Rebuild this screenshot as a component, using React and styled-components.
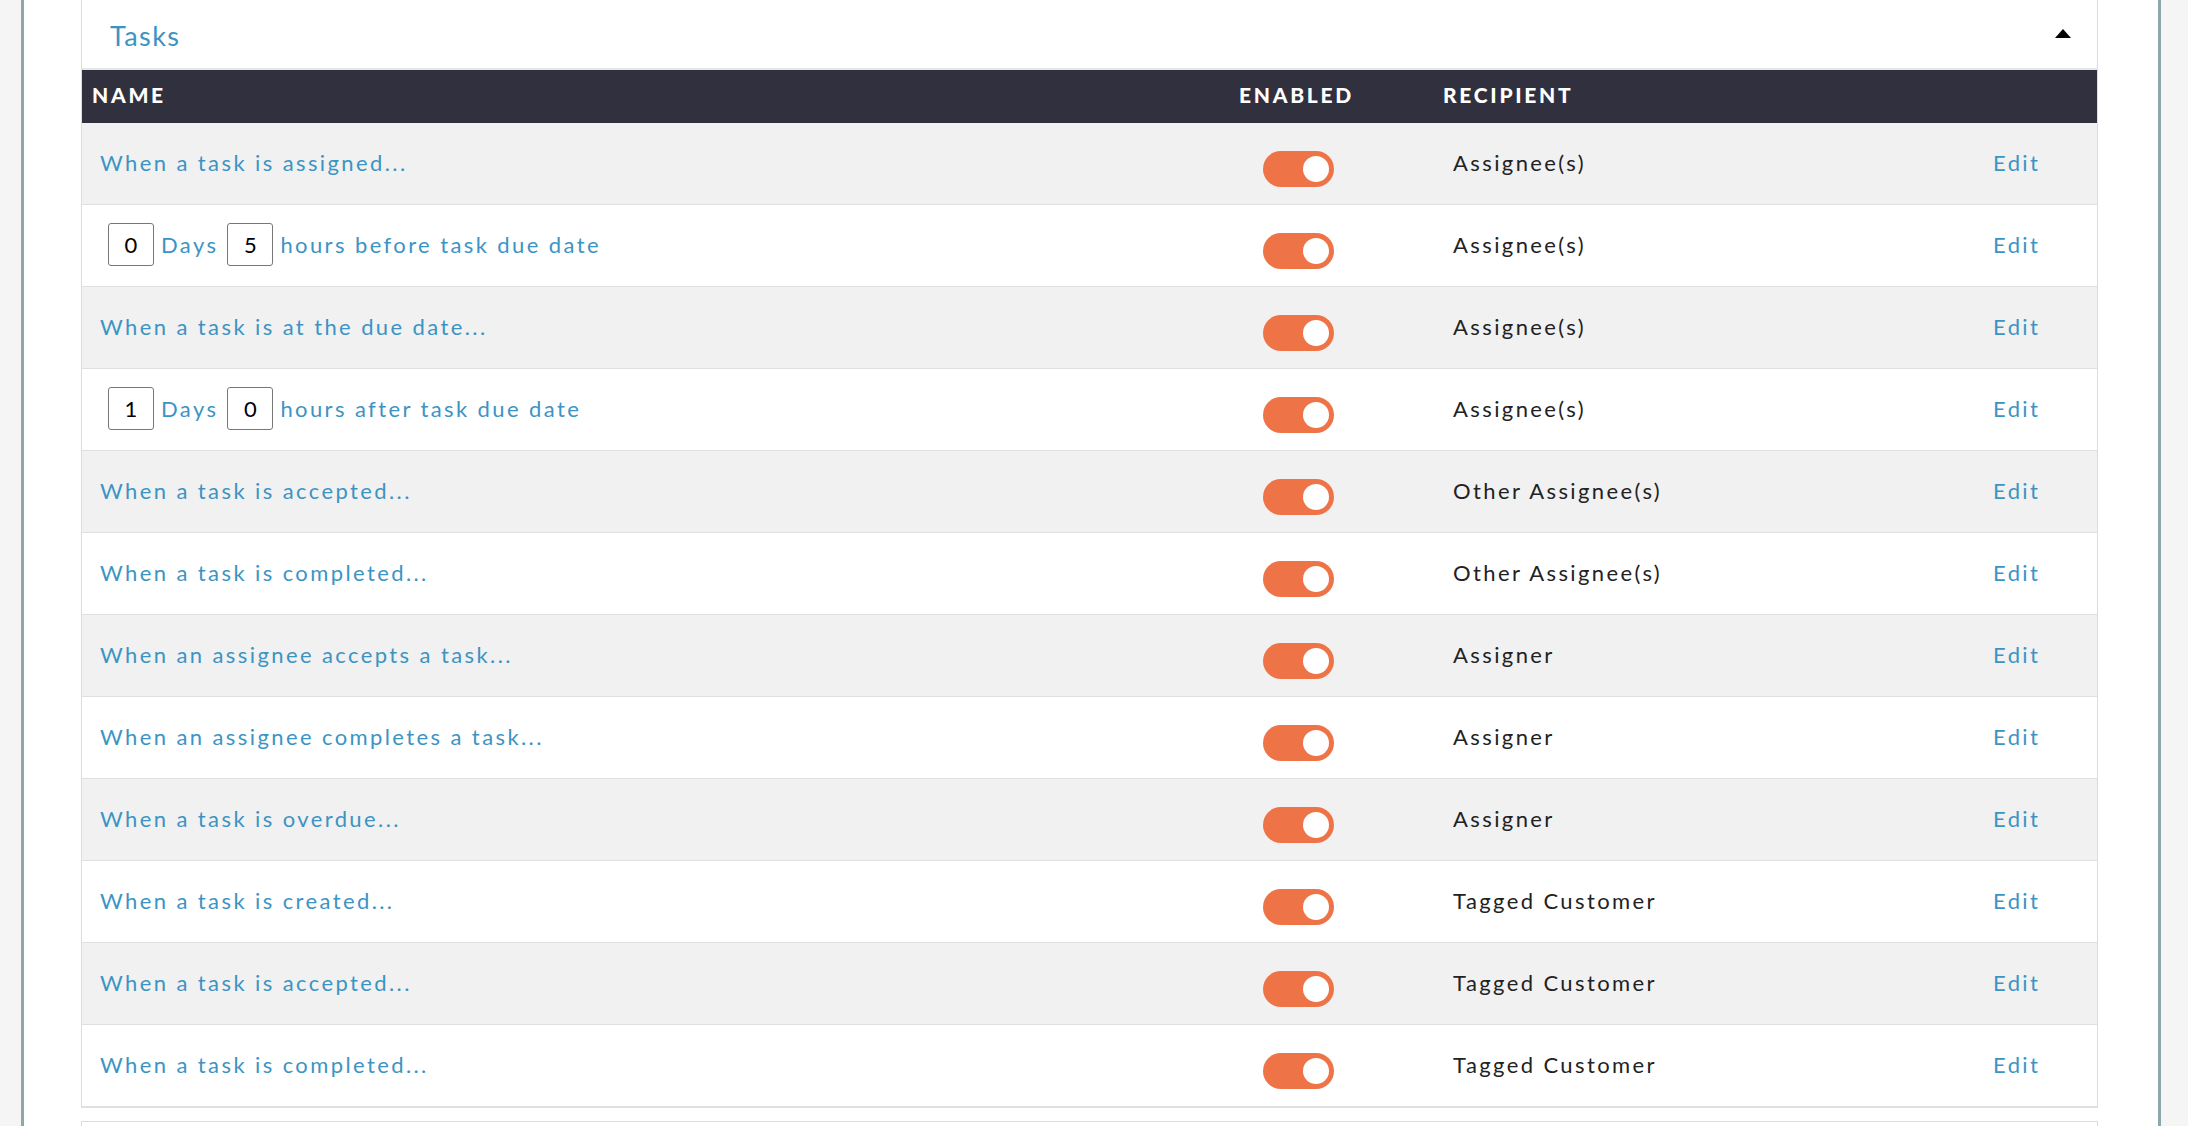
import React from "react";
import styled, { createGlobalStyle } from "styled-components";

const GlobalStyle = createGlobalStyle`
  html, body {
    margin: 0;
    padding: 0;
    background: #f5f5f5;
    font-family: Lato, "Open Sans", sans-serif;
  }
`;

const Page = styled.div`
  margin-left: 21px;
  width: 2140px;
  min-height: 1126px;
  background: #fff;
  border-left: 3px solid #8fa6ae;
  border-right: 3px solid #8fa6ae;
  padding: 0 60px 0 57px;
  box-sizing: border-box;
`;

const Panel = styled.div`
  background: #fff;
  border: 1px solid #dddddd;
  border-top: none;
  border-bottom: 2px solid #e0e0e0;
`;

const PanelHeader = styled.div`
  height: 68px;
  display: flex;
  align-items: center;
  justify-content: space-between;
  padding: 0 26px 0 28px;
  border-bottom: 2px solid #e6e6e6;
`;

const Title = styled.h2`
  margin: 3px 0 0;
  font-size: 27px;
  font-weight: 400;
  letter-spacing: 1.4px;
  color: #3b94c4;
`;

const Caret = styled.span`
  width: 0;
  height: 0;
  border-left: 8.5px solid transparent;
  border-right: 8.5px solid transparent;
  border-bottom: 9px solid #000;
  margin-bottom: 2px;
`;

const Grid = styled.div`
  display: grid;
  grid-template-columns: 1147px 204px 540px 1fr;
  align-items: center;
  height: ${({ $head }) => ($head ? "53px" : "81px")};
  background: ${({ $head, $shade }) =>
    $head ? "#31303e" : $shade ? "#f1f1f1" : "#ffffff"};
  border-bottom: ${({ $head, $last }) =>
    $head || $last ? "none" : "1px solid #e0e0e0"};
`;

const HeadCell = styled.div`
  padding: 0 0 4px 10px;
  color: #fff;
  font-size: 21px;
  font-weight: 900;
  letter-spacing: 2.7px;
  text-transform: uppercase;
`;

const Cell = styled.div`
  padding: 0 0 2px ${({ $pad }) => $pad ?? 18}px;
  display: flex;
  align-items: center;
  font-size: 22px;
  letter-spacing: 2.4px;
  color: ${({ $dark }) => ($dark ? "#222" : "#3b94c4")};
`;

const Link = styled.a`
  color: #3b94c4;
  text-decoration: none;
  cursor: pointer;
`;

const NumBox = styled.span`
  display: inline-flex;
  align-items: center;
  justify-content: center;
  width: 44px;
  height: 41px;
  border: 1px solid #777;
  border-radius: 3px;
  background: #fff;
  color: #000;
  font-size: 22px;
  letter-spacing: 0;
  margin: 0 7px 0 9px;
  &:first-child {
    margin-left: 8px;
  }
`;

const Toggle = styled.span`
  display: inline-flex;
  align-items: center;
  justify-content: ${({ $on }) => ($on ? "flex-end" : "flex-start")};
  width: 71px;
  height: 36px;
  border-radius: 18px;
  background: #ee7346;
  padding: 0 5px;
  box-sizing: border-box;
  margin-top: 12px;
  &::after {
    content: "";
    width: 26px;
    height: 26px;
    border-radius: 50%;
    background: #fff;
  }
`;

const NextPanel = styled.div`
  margin-top: 13px;
  height: 40px;
  border: 1px solid #dddddd;
  border-bottom: none;
  background: #fff;
`;

const rows = [
  { name: "When a task is assigned...", to: "Assignee(s)" },
  { days: 0, hours: 5, text: "hours before task due date", to: "Assignee(s)" },
  { name: "When a task is at the due date...", to: "Assignee(s)" },
  { days: 1, hours: 0, text: "hours after task due date", to: "Assignee(s)" },
  { name: "When a task is accepted...", to: "Other Assignee(s)" },
  { name: "When a task is completed...", to: "Other Assignee(s)" },
  { name: "When an assignee accepts a task...", to: "Assigner" },
  { name: "When an assignee completes a task...", to: "Assigner" },
  { name: "When a task is overdue...", to: "Assigner" },
  { name: "When a task is created...", to: "Tagged Customer" },
  { name: "When a task is accepted...", to: "Tagged Customer" },
  { name: "When a task is completed...", to: "Tagged Customer" },
];

export default function App() {
  return (
    <>
      <GlobalStyle />
      <Page>
        <Panel>
          <PanelHeader>
            <Title>Tasks</Title>
            <Caret />
          </PanelHeader>
          <Grid $head>
            <HeadCell>Name</HeadCell>
            <HeadCell>Enabled</HeadCell>
            <HeadCell>Recipient</HeadCell>
            <HeadCell />
          </Grid>
          {rows.map((r, i) => (
            <Grid key={i} $shade={i % 2 === 0} $last={i === rows.length - 1}>
              {r.name ? (
                <Cell>
                  <Link>{r.name}</Link>
                </Cell>
              ) : (
                <Cell>
                  <NumBox>{r.days}</NumBox>
                  <span>Days</span>
                  <NumBox>{r.hours}</NumBox>
                  <span>{r.text}</span>
                </Cell>
              )}
              <Cell $pad={34}>
                <Toggle $on />
              </Cell>
              <Cell $pad={20} $dark>
                {r.to}
              </Cell>
              <Cell $pad={20}>
                <Link>Edit</Link>
              </Cell>
            </Grid>
          ))}
        </Panel>
        <NextPanel />
      </Page>
    </>
  );
}
